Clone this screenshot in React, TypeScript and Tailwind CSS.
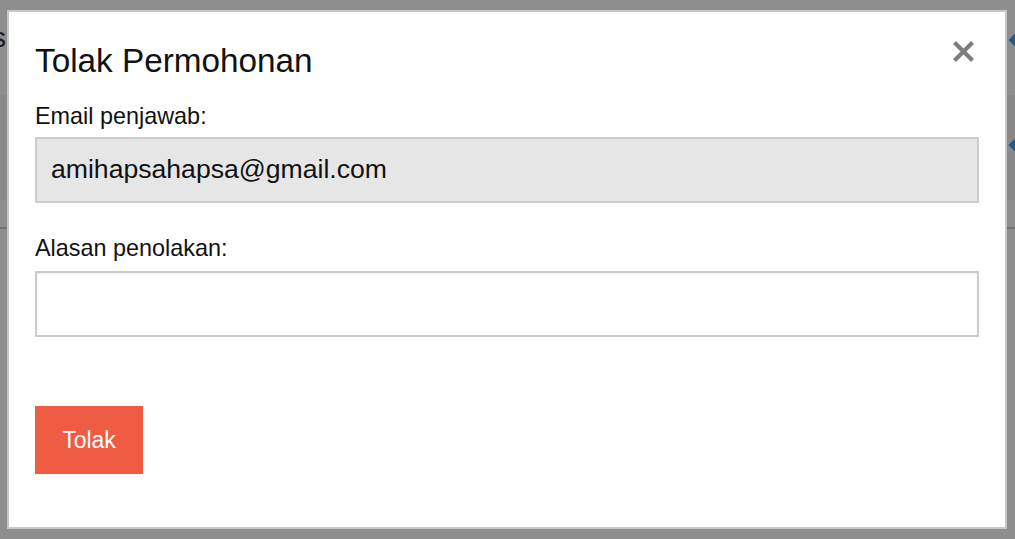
import React from "react";

function Diamond() {
  return <div className="w-[12px] h-[12px] rotate-45 bg-[#1f5a8c] mr-[-8px]" />;
}

export default function App() {
  return (
    <div
      className="relative w-[1015px] h-[539px] overflow-hidden bg-[#8e8e8e]"
      style={{ fontFamily: '"Liberation Sans", Arial, sans-serif' }}
    >
      {/* background page under overlay */}
      <div className="flex flex-col w-full h-full">
        <div className="h-[95px] flex justify-between items-start">
          <span className="text-[28px] leading-none text-[#1c1c1c] ml-[-8px] mt-[24px]">s</span>
          <div className="mt-[34px]"><Diamond /></div>
        </div>
        <div className="h-[105px] bg-[#888888] flex justify-end items-start">
          <div className="mt-[44px]"><Diamond /></div>
        </div>
        <div className="h-[27px]" />
        <div className="h-[2px] bg-[#717171]" />
        <div className="flex-1" />
      </div>

      {/* modal */}
      <div className="absolute left-[7px] top-[10px] w-[1000px] h-[519px] bg-white border-2 border-[#c7c7c7] px-[26px] text-[#111111]">
        <div className="flex justify-between items-start">
          <h4 className="text-[33.3px] leading-[36px] pt-[31px] font-normal">Tolak Permohonan</h4>
          <button className="mt-[28px] mr-[4px] w-[23px] h-[23px]" aria-label="close">
            <svg width="23" height="23" viewBox="0 0 23 23">
              <path d="M2.5 2.5 L20.5 20.5 M20.5 2.5 L2.5 20.5" stroke="#7d7d7d" strokeWidth="4.2" strokeLinecap="butt" />
            </svg>
          </button>
        </div>
        <label className="block text-[23.4px] leading-[26px] mt-[24px]">Email penjawab:</label>
        <div className="mt-[8px] h-[66px] border-2 border-[#cccccc] bg-[#e6e6e6] flex items-center pl-[14px] text-[26.6px] text-[#111111]">
          amihapsahapsa@gmail.com
        </div>
        <label className="block text-[23.4px] leading-[26px] mt-[32px]">Alasan penolakan:</label>
        <div className="mt-[10px] h-[66px] border-2 border-[#cccccc] bg-white shadow-[inset_0_1px_2px_rgba(0,0,0,0.075)]" />
        <button className="mt-[69px] w-[108px] h-[68px] bg-[#ef5b43] text-white text-[23px] flex items-center justify-center">
          Tolak
        </button>
      </div>
    </div>
  );
}
